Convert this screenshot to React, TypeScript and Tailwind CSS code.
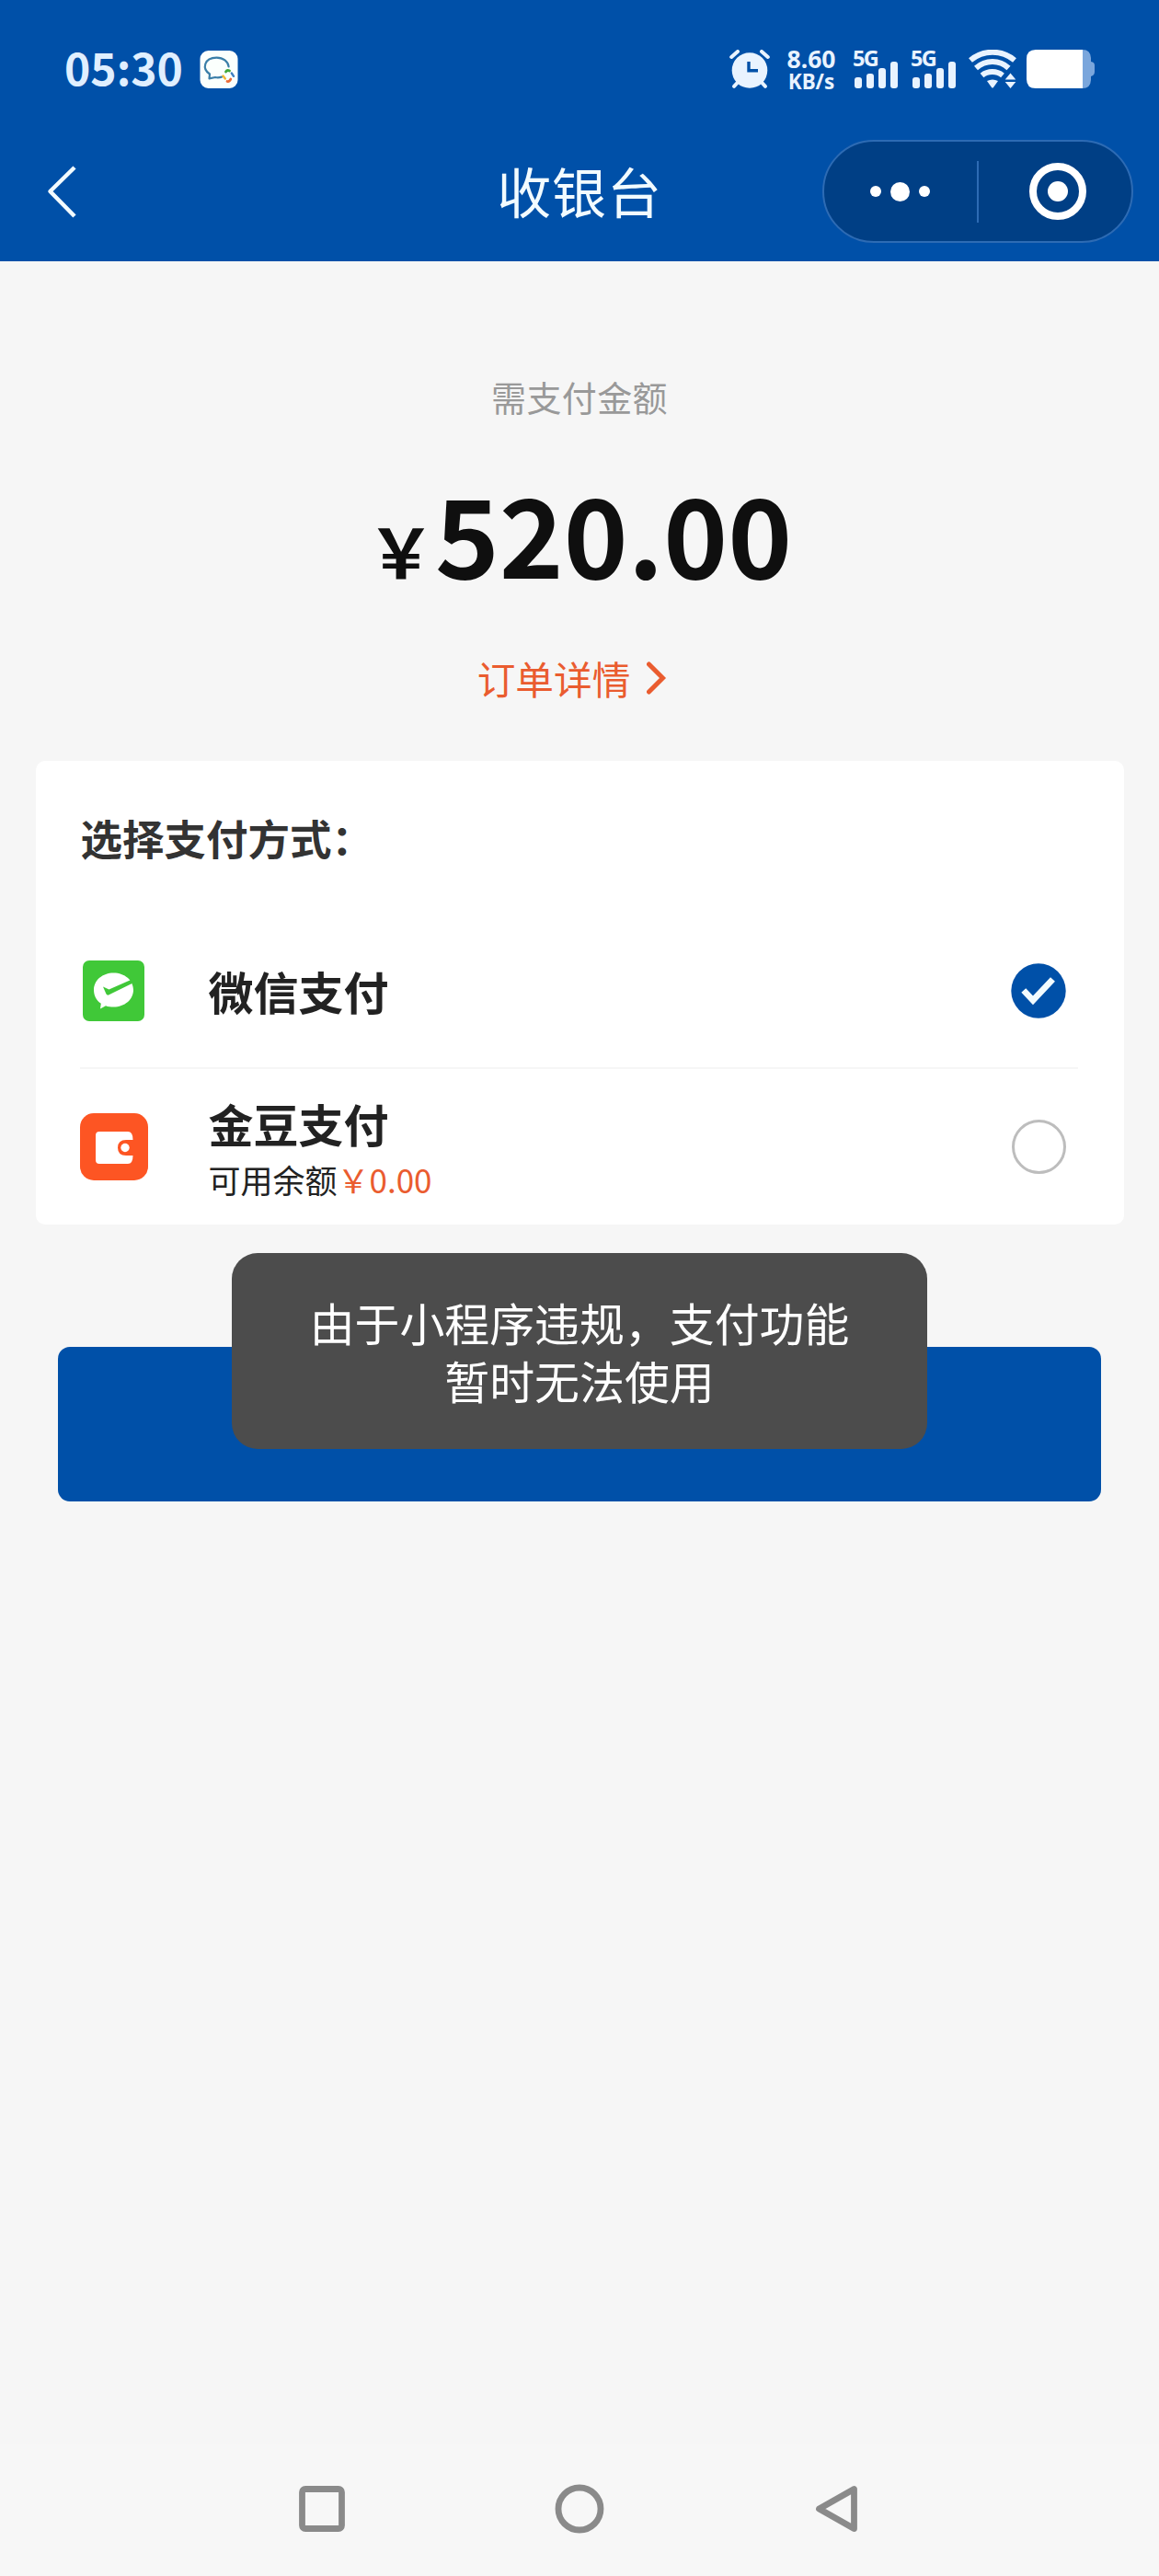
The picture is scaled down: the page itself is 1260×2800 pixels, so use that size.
import React from "react";

function AppBadge() {
  return (
    <svg className="ml-[21px] mt-[54px] h-[43px] w-[42px]" viewBox="0 0 42 43">
      <rect x="0.5" y="1" width="41" height="41" rx="9" fill="#fbfffd" />
      <path
        d="M24 29.6 C21.5 30.4 19 30.4 17 30 L10.5 31.3 L11 26.5 C6.5 23.5 5.2 19 6.3 15.5 C7.8 11 12.5 8.6 18.5 8.6 C25.5 8.6 31 12.8 31.6 18.5"
        fill="none"
        stroke="#3a7ea8"
        strokeWidth="2.2"
        strokeLinejoin="round"
        strokeLinecap="round"
      />
      <path d="M28.5 24 Q30 21.5 32.5 23" stroke="#43a83a" strokeWidth="2.8" strokeLinecap="round" fill="none" />
      <path d="M34.8 25.5 L37 28.8" stroke="#3f7fc0" strokeWidth="2.4" strokeLinecap="round" />
      <path d="M33.8 32 Q32.5 35 30 34.5" stroke="#ec6a35" strokeWidth="2.8" strokeLinecap="round" fill="none" />
      <path d="M27.8 31.5 L25.5 28.5" stroke="#f2b632" strokeWidth="2.4" strokeLinecap="round" />
    </svg>
  );
}

function AlarmIcon() {
  return (
    <svg className="mt-[54px] h-[43px] w-[44px]" viewBox="0 0 44 43">
      <g stroke="#e9f3ff" strokeLinecap="round" strokeWidth="4">
        <path d="M2.2 8 L9 2" />
        <path d="M41.8 8 L35 2" />
        <path d="M9.5 35 L5 39.8" />
        <path d="M34.5 35 L39 39.8" />
      </g>
      <circle cx="22" cy="22.5" r="19.3" fill="#e9f3ff" />
      <path d="M21 13 V22.8 H31" fill="none" stroke="#0050a8" strokeWidth="3.4" />
    </svg>
  );
}

function Signal() {
  return (
    <div className="relative h-[43px] w-[50px]">
      <span className="absolute left-0 top-0 font-['Noto_Sans'] text-[23.5px] font-bold leading-[18px] tracking-[-1.8px] text-[#e9f3ff]">
        5G
      </span>
      <svg className="absolute left-0 top-0" width="50" height="43" viewBox="0 0 50 43" fill="#e9f3ff">
        <rect x="2" y="30" width="8" height="12" rx="3" />
        <rect x="15" y="26" width="8" height="16" rx="3" />
        <rect x="28" y="20" width="8" height="22" rx="3" />
        <rect x="41" y="13" width="8" height="29" rx="3" />
      </svg>
    </div>
  );
}

function WifiIcon() {
  return (
    <svg className="ml-[13px] mt-[54px] h-[43px] w-[52px]" viewBox="0 0 52 43">
      <g fill="none" stroke="#e9f3ff" strokeWidth="6">
        <path d="M2 11.5 C16 -0.2 36 -0.2 50 11.5" />
        <path d="M8 20 C18.5 10.7 33.5 10.7 43.5 20" />
        <path d="M14.5 28 C21 22.7 30.5 22.7 37 28" />
      </g>
      <path d="M20 34 Q26 31 32 34 L27 41 Q26 42 25 41 Z" fill="#e9f3ff" />
      <path d="M39.7 32.5 L45.5 25.5 L51.3 32.5 Z M39.7 35 L45.5 42 L51.3 35 Z" fill="#e9f3ff" />
    </svg>
  );
}

function BatteryIcon() {
  return (
    <svg className="ml-[11px] mt-[54px] h-[43px] w-[75px]" viewBox="0 0 75 43">
      <path
        d="M55 0 H61 Q69.5 0 70 9 V13 Q74 13.5 74 17 V24 Q74 28 70 29 V33 Q69.5 42 61 42 H55 Z"
        fill="#7aa6dc"
      />
      <path d="M10 0 H61 V42 H10 Q0 42 0 32 V10 Q0 0 10 0 Z" fill="#ffffff" />
    </svg>
  );
}

function StatusBar() {
  return (
    <div className="flex h-[136px] items-start">
      <span className="ml-[70px] mt-[47px] w-[126px] whitespace-nowrap text-[48px] font-bold leading-[50px] text-[#e0efff]">
        05:30
      </span>
      <AppBadge />
      <div className="ml-auto mr-[69px] flex items-start">
        <AlarmIcon />
        <div className="ml-[17px] mt-[52px] flex w-[56px] flex-col items-center whitespace-nowrap font-['Noto_Sans'] font-bold text-[#e9f3ff]">
          <span className="text-[26.5px] leading-[24px]">8.60</span>
          <span className="text-[22.5px] leading-[25px]">KB/s</span>
        </div>
        <div className="ml-[17px] mt-[54px] flex gap-[13px]">
          <Signal />
          <Signal />
        </div>
        <WifiIcon />
        <BatteryIcon />
      </div>
    </div>
  );
}

function NavBar() {
  return (
    <div className="grid h-[148px] grid-cols-[1fr_auto_1fr] items-start">
      <svg className="ml-[50px] mt-[43px] h-[60px] w-[36px]" viewBox="0 0 36 60">
        <path d="M31 3 L4.5 29 L31 56" fill="none" stroke="#f2fbff" strokeWidth="4.5" strokeLinejoin="round" />
      </svg>
      <h1 className="mt-[41px] text-[59px] font-normal leading-[60px] tracking-[0.8px] text-[#f2fbff]">收银台</h1>
      <div className="mr-[28px] mt-[16px] flex h-[112px] w-[338px] items-center justify-self-end rounded-full border-2 border-[#2d6bb4] bg-[#003f85]">
        <div className="flex w-[166px] items-center justify-center gap-[10px] pr-[1px]">
          <span className="h-[12px] w-[12px] rounded-full bg-white" />
          <span className="h-[21px] w-[21px] rounded-full bg-white" />
          <span className="h-[12px] w-[12px] rounded-full bg-white" />
        </div>
        <span className="h-[67px] w-[2px] bg-[#2d6bb4]" />
        <div className="flex flex-1 justify-center pl-[5px]">
          <span className="flex h-[62px] w-[62px] items-center justify-center rounded-full border-[8px] border-white">
            <span className="h-[22px] w-[22px] rounded-full bg-white" />
          </span>
        </div>
      </div>
    </div>
  );
}

function Summary() {
  return (
    <section className="flex h-[543px] flex-col items-center">
      <p className="mt-[127px] text-[38px] leading-[40px] tracking-[0.4px] text-[#999999]">需支付金额</p>
      <p className="mt-[57px] flex h-[158px] items-baseline whitespace-nowrap font-bold leading-[140px] text-[#0f0f0f]">
        <span className="text-[74px]">￥</span>
        <span className="text-[118.5px]">520.00</span>
      </p>
      <a className="mt-[50px] flex h-[42px] items-center text-[41.7px] leading-[42px] text-[#ea5c2f]">
        订单详情
        <svg className="ml-[18px] mr-[16px] h-[36px] w-[22px]" viewBox="0 0 22 36">
          <path d="M2.5 3 L17.5 18 L2.5 33" fill="none" stroke="#ea5c2f" strokeWidth="5" strokeLinecap="round" />
        </svg>
      </a>
    </section>
  );
}

function WechatPayIcon() {
  return (
    <svg className="h-[66px] w-[67px]" viewBox="0 0 67 66">
      <rect width="67" height="66" rx="7" fill="#40c838" />
      <path
        d="M33.5 13.5 C45.5 13.5 55 21.5 55 32 C55 42.5 45.5 50.5 33.5 50.5 C30.5 50.5 27.5 50.2 25 49.2 L19 52.5 L19.8 46.8 C14.8 43.5 12 38 12 32 C12 21.5 21.5 13.5 33.5 13.5 Z"
        fill="#ffffff"
      />
      <path d="M22 28.5 L28.5 31.5 L53.5 20.5 V25 L28 37.5 Q26.5 38 25.5 36.5 Z" fill="#40c838" />
    </svg>
  );
}

function WalletIcon() {
  return (
    <svg className="h-[73px] w-[74px]" viewBox="0 0 74 73">
      <rect width="74" height="73" rx="15" fill="#fd5523" />
      <path
        d="M21 20 H52 Q57.5 20 57.5 29 H50 Q41 29 41 37.5 Q41 46 50 46 H57.5 Q57.5 55 52 55 H21 Q17 55 17 51 V24 Q17 20 21 20 Z"
        fill="#ffffff"
      />
      <circle cx="49" cy="37.5" r="4.7" fill="#ffffff" />
    </svg>
  );
}

function PaymentCard() {
  return (
    <section className="mx-auto flex h-[504px] w-[1183px] flex-col rounded-[10px] bg-white pl-[48px] pr-[50px]">
      <h2 className="mt-[59px] pl-[1px] text-[45.5px] font-bold leading-[48px] text-[#333333]">选择支付方式：</h2>
      <div className="mt-[64px] flex h-[164px] items-center border-b-2 border-[#f6f6f6]">
        <div className="flex w-[140px] pb-[4px] pl-[3px]">
          <WechatPayIcon />
        </div>
        <span className="pb-[5px] text-[49px] font-bold leading-[50px] text-[#222222]">微信支付</span>
        <svg className="mb-[4px] ml-auto mr-[13px] h-[60px] w-[60px]" viewBox="0 0 60 60">
          <circle cx="30" cy="30" r="29.7" fill="#0050a8" />
          <path d="M13.8 29.5 L24 40.3 L45.5 17.5" fill="none" stroke="#f2fbff" strokeWidth="6.8" />
        </svg>
      </div>
      <div className="flex h-[169px] items-start">
        <div className="mt-[48px] flex w-[140px]">
          <WalletIcon />
        </div>
        <div className="mt-[34px] flex flex-col">
          <span className="text-[49px] font-bold leading-[50px] text-[#222222]">金豆支付</span>
          <span className="mt-[16px] text-[35px] leading-[40px] text-[#222222]">
            可用余额<span className="text-[#ea5c2f]">￥0.00</span>
          </span>
        </div>
        <span className="ml-auto mr-[13px] mt-[55px] h-[59px] w-[59px] rounded-full border-[3px] border-[#bdbdbd]" />
      </div>
    </section>
  );
}

function SystemNav() {
  return (
    <footer className="flex h-[144px] items-center justify-center bg-[#f7f7f7] pb-[2px]">
      <div className="flex w-[620px] items-center justify-between">
        <svg width="60" height="60" viewBox="0 0 60 60">
          <rect x="8.5" y="8.5" width="43" height="43" rx="3.5" fill="none" stroke="#8a8a8a" strokeWidth="6.8" />
        </svg>
        <svg width="60" height="60" viewBox="0 0 60 60">
          <circle cx="30" cy="30" r="23" fill="none" stroke="#8a8a8a" strokeWidth="6.8" />
        </svg>
        <svg width="60" height="60" viewBox="0 0 60 60">
          <path
            d="M10.5 30 L48.5 8.5 V51.5 Z"
            fill="none"
            stroke="#8a8a8a"
            strokeWidth="6.8"
            strokeLinejoin="round"
          />
        </svg>
      </div>
    </footer>
  );
}

export default function App() {
  return (
    <div className="flex h-[2800px] w-[1260px] flex-col bg-[#f6f6f6] font-['Noto_Sans_CJK_SC',sans-serif]">
      <header className="h-[284px] bg-[#0050a8]">
        <StatusBar />
        <NavBar />
      </header>
      <Summary />
      <PaymentCard />
      <div className="relative mt-[133px] flex flex-1 flex-col items-center">
        <button className="h-[168px] w-[1134px] rounded-[13px] bg-[#0050a8]" aria-label="支付" />
        <div
          role="status"
          className="absolute -top-[102px] flex h-[213px] w-[756px] flex-col items-center justify-center rounded-[28px] bg-[#4c4c4c] pb-[2px] text-[48.9px] leading-[63px] text-white"
        >
          <p className="whitespace-nowrap text-center">
            由于小程序违规，支付功能
            <br />
            暂时无法使用
          </p>
        </div>
      </div>
      <SystemNav />
    </div>
  );
}
